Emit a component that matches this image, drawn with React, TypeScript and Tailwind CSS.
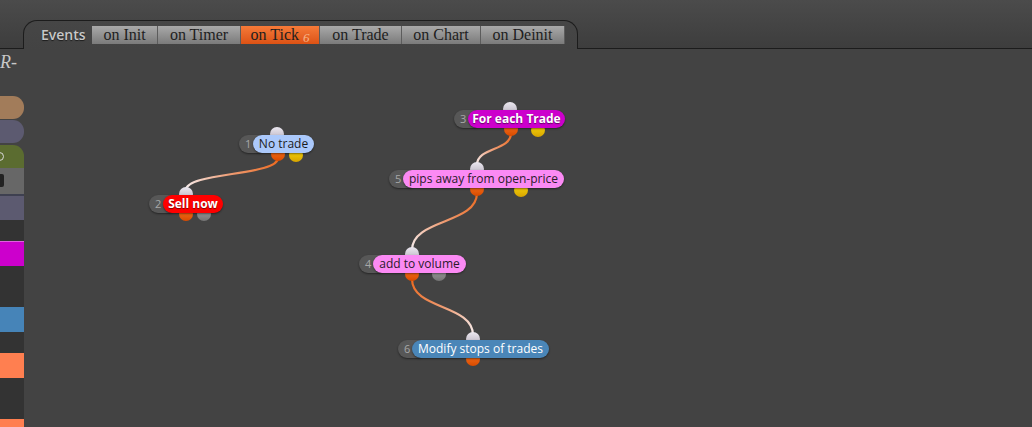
import React from "react";

type Out = { x: number; c: "orange" | "yellow" | "gray"; dy?: number };
type N = {
  num: number;
  px: number;
  y: number;
  lx: number;
  lw: number;
  label: string;
  bg: string;
  fg: string;
  bold?: boolean;
  inX: number;
  outs: Out[];
};

const nodes: N[] = [
  { num: 1, px: 239, y: 135, lx: 253, lw: 61, label: "No trade", bg: "#abc9fb", fg: "#1c1c1c", inX: 277, outs: [{ x: 278, c: "orange" }, { x: 296, c: "yellow", dy: 1 }] },
  { num: 2, px: 149, y: 195, lx: 163, lw: 60, label: "Sell now", bg: "#ff0000", fg: "#ffffff", bold: true, inX: 186, outs: [{ x: 186, c: "orange" }, { x: 204, c: "gray" }] },
  { num: 3, px: 454, y: 110, lx: 468, lw: 97, label: "For each Trade", bg: "#cc00cc", fg: "#ffffff", bold: true, inX: 510, outs: [{ x: 511, c: "orange" }, { x: 538, c: "yellow", dy: 1 }] },
  { num: 5, px: 389, y: 170, lx: 403, lw: 161, label: "pips away from open-price", bg: "#fb8af4", fg: "#2a1a2a", inX: 477, outs: [{ x: 477, c: "orange" }, { x: 521, c: "yellow", dy: 1 }] },
  { num: 4, px: 359, y: 255, lx: 373, lw: 93, label: "add to volume", bg: "#fb8af4", fg: "#2a1a2a", inX: 412, outs: [{ x: 412, c: "orange" }, { x: 439, c: "gray" }] },
  { num: 6, px: 398, y: 340, lx: 412, lw: 137, label: "Modify stops of trades", bg: "#4a86b8", fg: "#ffffff", inX: 473, outs: [{ x: 473, c: "orange" }] },
];

const edges = [
  { x1: 278, y1: 158, x2: 186, y2: 190 },
  { x1: 511, y1: 133, x2: 477, y2: 165 },
  { x1: 477, y1: 193, x2: 412, y2: 250 },
  { x1: 412, y1: 279, x2: 473, y2: 335 },
];

const outClass: Record<string, string> = {
  orange: "bg-gradient-to-b from-[#ff7a20] to-[#d84a00]",
  yellow: "bg-gradient-to-b from-[#ffe010] to-[#d6a400]",
  gray: "bg-gradient-to-b from-[#a8a8a8] to-[#747474]",
};

function Node({ n }: { n: N }) {
  return (
    <>
      <div
        className="absolute w-[14px] h-[14px] rounded-full bg-gradient-to-b from-[#ece8f0] to-[#b4aebc]"
        style={{ left: n.inX - 7, top: n.y - 8 }}
      />
      {n.outs.map((o, i) => (
        <div
          key={i}
          className={"absolute w-[14px] h-[14px] rounded-full " + outClass[o.c]}
          style={{ left: o.x - 7, top: n.y + 12 + (o.dy ?? 0) }}
        />
      ))}
      <div
        className="absolute h-[18px] rounded-full bg-[#575757] shadow-[0_1px_2px_rgba(0,0,0,0.45)] text-[11px] leading-[18px] text-[#a8a8a8] pl-[6px] font-['Open_Sans',sans-serif]"
        style={{ left: n.px, top: n.y, width: n.lx - n.px + 14 }}
      >
        {n.num}
      </div>
      <div
        className={
          "absolute h-[18px] rounded-full text-[12px] leading-[18px] text-center whitespace-nowrap font-['Open_Sans',sans-serif] shadow-[0_1px_2px_rgba(0,0,0,0.45)] " +
          (n.bold ? "font-bold [text-shadow:0_1px_1px_rgba(0,0,0,0.5)]" : "")
        }
        style={{ left: n.lx, top: n.y, width: n.lw, background: n.bg, color: n.fg }}
      >
        {n.label}
      </div>
    </>
  );
}

const tabs = [
  { t: "on Init", w: "w-[66px]" },
  { t: "on Timer", w: "w-[83px]" },
  { t: "on Tick", w: "w-[79px]", active: true },
  { t: "on Trade", w: "w-[82px]" },
  { t: "on Chart", w: "w-[79px]" },
  { t: "on Deinit", w: "w-[84px]" },
];

export default function App() {
  return (
    <div className="relative w-[1032px] h-[427px] overflow-hidden bg-[#434343] flex flex-col">
      {/* header */}
      <div className="h-[49px] flex bg-gradient-to-b from-[#4b4b4b] to-[#3d3d3d] shrink-0">
        <div className="w-[23px] h-full border-b border-[#1c1c1c]" />
        <div className="mt-[20px] w-[555px] h-[29px] border-t border-l border-r border-[#1c1c1c] rounded-t-[14px] bg-gradient-to-b from-[#464646] to-[#434343] flex items-start pt-[5px] pl-[17px]">
          <div className="w-[51px] h-[18px] leading-[18px] text-[14px] font-semibold text-[#c8c8c8] font-['Open_Sans',sans-serif] [text-shadow:0_1px_1px_rgba(0,0,0,0.6)]">
            Events
          </div>
          {tabs.map((t) => (
            <div
              key={t.t}
              className={
                t.w +
                " h-[18px] border-r border-[#5c5c5c] text-center text-[16px] leading-[18px] text-[#1e1e1e] font-['Liberation_Serif',serif] whitespace-nowrap " +
                (t.active
                  ? "bg-gradient-to-b from-[#f67a38] to-[#dc5214]"
                  : "bg-gradient-to-b from-[#a9a9a9] to-[#7b7b7b]")
              }
            >
              {t.t}
              {t.active && (
                <span className="ml-[4px] text-[13px] italic text-[#f5b488] relative top-[2px]">6</span>
              )}
            </div>
          ))}
        </div>
        <div className="flex-1 h-full border-b border-[#1c1c1c]" />
      </div>

      {/* body */}
      <div className="flex flex-1 min-h-0">
        <div className="w-[24px] flex flex-col shrink-0">
          <div className="h-[47px] relative">
            <span className="absolute left-0 top-[2px] text-[18px] leading-[22px] italic text-[#c8c8c8] font-['Liberation_Serif',serif]">
              R-
            </span>
          </div>
          <div className="h-[23px] mb-[1px] rounded-r-[11px] bg-[#a27c5a]" />
          <div className="h-[23px] mb-[2px] rounded-r-[11px] bg-[#5c5a70]" />
          <div className="h-[23px] rounded-tr-[11px] bg-[#5b6c30] relative">
            <div className="absolute left-[-5px] top-[7px] w-[9px] h-[9px] rounded-full border border-[#d8d8d8]" />
          </div>
          <div className="h-[26px] bg-[#676767] relative">
            <div className="absolute left-[-3px] top-[6px] w-[7px] h-[13px] rounded-[2px] bg-[#222]" />
          </div>
          <div className="h-[2px] bg-[#3e4050]" />
          <div className="h-[24px] bg-[#5c5a70]" />
          <div className="h-[21px] bg-[#333333]" />
          <div className="h-[25px] bg-[#cc00cc] border-t border-[#e060e0]" />
          <div className="h-[41px] bg-[#333333]" />
          <div className="h-[25px] bg-[#4684b8]" />
          <div className="h-[21px] bg-[#333333]" />
          <div className="h-[25px] bg-[#ff7f50]" />
          <div className="h-[41px] bg-[#333333]" />
          <div className="flex-1 bg-[#ff7f50]" />
        </div>
        <div className="flex-1" />
      </div>

      {/* edges */}
      <svg className="absolute left-0 top-0 pointer-events-none" width={1032} height={427}>
        <defs>
          {edges.map((e, i) => (
            <linearGradient
              key={i}
              id={"g" + i}
              gradientUnits="userSpaceOnUse"
              x1={e.x1}
              y1={e.y1}
              x2={e.x2}
              y2={e.y2}
            >
              <stop offset="0" stopColor="#ec6a20" />
              <stop offset="0.5" stopColor="#ef9a70" />
              <stop offset="1" stopColor="#f6ecec" />
            </linearGradient>
          ))}
        </defs>
        {edges.map((e, i) => {
          const k = Math.max(18, (e.y2 - e.y1) * 0.55);
          return (
            <path
              key={i}
              d={`M${e.x1},${e.y1} C${e.x1},${e.y1 + k} ${e.x2},${e.y2 - k} ${e.x2},${e.y2}`}
              fill="none"
              stroke={`url(#g${i})`}
              strokeWidth={2.2}
            />
          );
        })}
      </svg>

      {nodes.map((n) => (
        <Node key={n.num} n={n} />
      ))}
    </div>
  );
}
